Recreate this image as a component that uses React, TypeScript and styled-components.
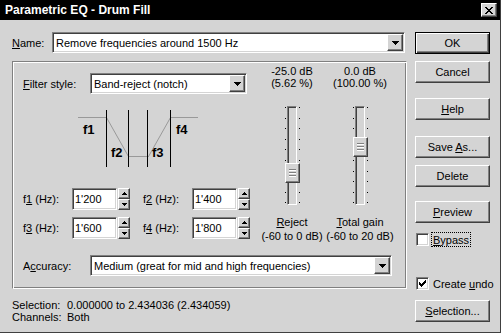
import React from 'react'
import styled, { createGlobalStyle, css } from 'styled-components'

const GlobalStyle = createGlobalStyle`
  html, body {
    margin: 0;
    padding: 0;
    background: #d4d4d4;
  }
  body {
    font-family: "Liberation Sans", Arial, sans-serif;
    font-size: 11px;
    color: #000;
  }
`

const raised = css`
  box-sizing: border-box;
  background: #d4d4d4;
  border: 1px solid;
  border-color: #fff #404040 #404040 #fff;
  box-shadow: inset -1px -1px #808080;
`

const sunken = css`
  box-sizing: border-box;
  border: 1px solid;
  border-color: #808080 #fff #fff #808080;
  box-shadow: inset 1px 1px #404040, inset -1px -1px #d4d4d4;
`

const Window = styled.div`
  box-sizing: border-box;
  width: 501px;
  height: 333px;
  background: #d4d4d4;
  border-right: 1px solid #404040;
  border-bottom: 1px solid #404040;
  display: flex;
  flex-direction: column;
  overflow: hidden;
`

const TitleBar = styled.div`
  height: 20px;
  flex: none;
  background: #000;
  color: #fff;
  display: flex;
  align-items: center;
  justify-content: space-between;
  padding: 0 3px 0 5px;
  font-size: 12px;
  font-weight: bold;
`

const CloseButton = styled.span`
  ${raised}
  width: 16px;
  height: 14px;
  display: flex;
  align-items: center;
  justify-content: center;
`

const Body = styled.div`
  display: flex;
  padding: 12px 0 0 12px;
`

const MainColumn = styled.div`
  width: 395px;
  display: flex;
  flex-direction: column;
`

const SideColumn = styled.div`
  width: 75px;
  margin-left: 8px;
  display: flex;
  flex-direction: column;
`

const Row = styled.div<{ $top?: number }>`
  display: flex;
  align-items: center;
  margin-top: ${(p) => p.$top ?? 0}px;
`

const Label = styled.span<{ $width: number }>`
  width: ${(p) => p.$width}px;
  flex: none;
  white-space: nowrap;
`

const Combo = styled.div<{ $width: number }>`
  ${sunken}
  width: ${(p) => p.$width}px;
  height: 21px;
  padding: 1px;
  display: flex;
  align-items: center;
  background: #fff;
`

const ComboText = styled.span`
  flex: 1;
  padding-left: 2px;
  white-space: nowrap;
  overflow: hidden;
`

const DropButton = styled.span`
  ${raised}
  width: 16px;
  height: 17px;
  flex: none;
  display: flex;
  align-items: center;
  justify-content: center;
`

const GroupBox = styled.div`
  box-sizing: border-box;
  height: 228px;
  margin-top: 8px;
  border: 1px solid;
  border-color: #808080 #fff #fff #808080;
  box-shadow: inset 1px 1px #fff, inset -1px -1px #808080;
  padding: 11px 0 0 10px;
`

const Upper = styled.div`
  display: flex;
  align-items: flex-start;
`

const FilterPane = styled.div`
  width: 228px;
  display: flex;
  flex-direction: column;
`

const Diagram = styled.svg`
  display: block;
  margin: 16px 0 0 55px;
`

const FreqRow = styled.div<{ $top: number }>`
  display: flex;
  align-items: center;
  margin-top: ${(p) => p.$top}px;
`

const FreqField = styled.div<{ $left: number }>`
  display: flex;
  align-items: center;
  margin-left: ${(p) => p.$left}px;
`

const NumInput = styled.div`
  ${sunken}
  width: 45px;
  height: 22px;
  padding: 1px 2px;
  display: flex;
  align-items: center;
  background: #fff;
`

const Spinner = styled.div`
  width: 12px;
  height: 22px;
  margin-left: 1px;
  display: flex;
  flex-direction: column;
`

const SpinButton = styled.span`
  ${raised}
  height: 11px;
  display: flex;
  align-items: center;
  justify-content: center;
`

const SliderPane = styled.div`
  display: flex;
  gap: 3px;
  margin: -8px 0 0 10px;
`

const SliderCol = styled.div<{ $width: number }>`
  width: ${(p) => p.$width}px;
  display: flex;
  flex-direction: column;
  align-items: center;
  text-align: center;
  white-space: nowrap;
`

const ValueText = styled.div`
  line-height: 12px;
`

const Caption = styled.div`
  line-height: 14px;
`

const SliderBox = styled.div`
  position: relative;
  width: 15px;
  height: 99px;
  margin: 17px 0 10px;
  background:
    repeating-linear-gradient(to bottom, #000 0 1px, transparent 1px 10.6px) left 1px / 1px 97px no-repeat,
    repeating-linear-gradient(to bottom, #000 0 1px, transparent 1px 10.6px) right 1px / 1px 97px no-repeat;
`

const Track = styled.div`
  ${sunken}
  width: 10px;
  height: 99px;
  margin-left: 2px;
  background: #d4d4d4;
`

const Thumb = styled.div<{ $top: number }>`
  ${raised}
  position: absolute;
  left: 0;
  top: ${(p) => p.$top}px;
  width: 15px;
  height: 20px;
  display: flex;
  align-items: center;
  justify-content: center;
`

const Grip = styled.span`
  width: 7px;
  height: 8px;
  background: repeating-linear-gradient(to bottom, #808080 0 1px, #fff 1px 2px, transparent 2px 3px);
`

const AccuracyRow = styled(Row)`
  margin-top: 12px;
`

const Status = styled.div`
  display: grid;
  grid-template-columns: 55px auto;
  line-height: 12px;
  margin-top: 10px;
`

const Button = styled.div<{ $top: number; $default?: boolean }>`
  ${raised}
  width: 75px;
  height: 22px;
  flex: none;
  margin-top: ${(p) => p.$top}px;
  display: flex;
  align-items: center;
  justify-content: center;
  white-space: nowrap;
  ${(p) =>
    p.$default &&
    css`
      border-color: #000;
      box-shadow: inset 1px 1px #fff, inset -1px -1px #404040, inset -2px -2px #808080;
    `}
`

const CheckRow = styled.div<{ $top: number }>`
  display: flex;
  align-items: center;
  height: 15px;
  margin: ${(p) => p.$top}px 0 0 1px;
  white-space: nowrap;
`

const CheckBox = styled.span`
  ${sunken}
  width: 13px;
  height: 13px;
  flex: none;
  background: #fff;
  display: flex;
  align-items: center;
  justify-content: center;
`

const CheckText = styled.span<{ $focused?: boolean }>`
  margin-left: 3px;
  padding: 1px 1px 0;
  line-height: 12px;
  outline: ${(p) => (p.$focused ? '1px dotted #000' : 'none')};
`

const ArrowDown = () => (
  <svg width='7' height='4' viewBox='0 0 7 4' shapeRendering='crispEdges'>
    <path d='M0 0h7v1h-1v1h-1v1h-1v1h-1v-1h-1v-1h-1v-1h-1z' fill='#000' />
  </svg>
)

const SpinArrow = ({ up }: { up?: boolean }) => (
  <svg width='5' height='3' viewBox='0 0 5 3' shapeRendering='crispEdges'>
    <path
      d={up ? 'M2 0h1v1h1v1h1v1h-5v-1h1v-1h1z' : 'M0 0h5v1h-1v1h-1v1h-1v-1h-1v-1h-1z'}
      fill='#000'
    />
  </svg>
)

const CloseGlyph = () => (
  <svg width='8' height='7' viewBox='0 0 8 7' shapeRendering='crispEdges'>
    <path
      d='M0 0h2v1h1v1h2v-1h1v-1h2v1h-1v1h-1v1h-1v1h1v1h1v1h1v1h-2v-1h-1v-1h-2v1h-1v1h-2v-1h1v-1h1v-1h1v-1h-1v-1h-1v-1h-1z'
      fill='#000'
    />
  </svg>
)

const Check = () => (
  <svg width='7' height='7' viewBox='0 0 7 7' shapeRendering='crispEdges'>
    <path d='M6 0h1v3h-1v1h-1v1h-1v1h-1v1h-1v-1h-1v-1h-1v-3h1v1h1v1h1v-1h1v-1h1v-1h1z' fill='#000' />
  </svg>
)

const ComboBox = ({ width, value }: { width: number; value: string }) => (
  <Combo $width={width}>
    <ComboText>{value}</ComboText>
    <DropButton>
      <ArrowDown />
    </DropButton>
  </Combo>
)

const Freq = ({ n, value, left }: { n: string; value: string; left: number }) => (
  <FreqField $left={left}>
    <Label $width={49}>
      f<u>{n}</u> (Hz):
    </Label>
    <NumInput>{value}</NumInput>
    <Spinner>
      <SpinButton>
        <SpinArrow up />
      </SpinButton>
      <SpinButton>
        <SpinArrow />
      </SpinButton>
    </Spinner>
  </FreqField>
)

const FilterDiagram = () => (
  <Diagram width='121' height='57' viewBox='0 0 121 57' shapeRendering='crispEdges'>
    <g stroke='#999' fill='none'>
      <path d='M0 7.5H28.5' />
      <path d='M92.5 7.5H120' />
      <path d='M50.5 46.5H70.5' />
      <path d='M28.5 7.5L50.5 46.5M70.5 46.5L92.5 7.5' shapeRendering='auto' />
    </g>
    <g stroke='#000'>
      <path d='M28.5 0V57M50.5 0V57M69.5 0V57M92.5 0V57' />
    </g>
    <g fontFamily='"Liberation Sans", Arial, sans-serif' fontWeight='bold' fontSize='13'>
      <text x='5' y='24'>f1</text>
      <text x='33' y='47'>f2</text>
      <text x='74' y='47'>f3</text>
      <text x='98' y='24'>f4</text>
    </g>
  </Diagram>
)

const Slider = ({ thumb }: { thumb: number }) => (
  <SliderBox>
    <Track />
    <Thumb $top={thumb}>
      <Grip />
    </Thumb>
  </SliderBox>
)

export default function App() {
  return (
    <>
      <GlobalStyle />
      <Window>
        <TitleBar>
          <span>Parametric EQ - Drum Fill</span>
          <CloseButton>
            <CloseGlyph />
          </CloseButton>
        </TitleBar>
        <Body>
          <MainColumn>
            <Row>
              <Label $width={40}>
                <u>N</u>ame:
              </Label>
              <ComboBox width={353} value='Remove frequencies around 1500 Hz' />
            </Row>
            <GroupBox>
              <Upper>
                <FilterPane>
                  <Row>
                    <Label $width={67}>
                      <u>F</u>ilter style:
                    </Label>
                    <ComboBox width={157} value='Band-reject (notch)' />
                  </Row>
                  <FilterDiagram />
                  <FreqRow $top={21}>
                    <Freq n='1' value="1'200" left={0} />
                    <Freq n='2' value="1'400" left={13} />
                  </FreqRow>
                  <FreqRow $top={7}>
                    <Freq n='3' value="1'600" left={0} />
                    <Freq n='4' value="1'800" left={13} />
                  </FreqRow>
                </FilterPane>
                <SliderPane>
                  <SliderCol $width={62}>
                    <ValueText>-25.0 dB</ValueText>
                    <ValueText>(5.62 %)</ValueText>
                    <Slider thumb={57} />
                    <Caption>
                      <u>R</u>eject
                    </Caption>
                    <Caption>(-60 to 0 dB)</Caption>
                  </SliderCol>
                  <SliderCol $width={68}>
                    <ValueText>0.0 dB</ValueText>
                    <ValueText>(100.00 %)</ValueText>
                    <Slider thumb={31} />
                    <Caption>
                      <u>T</u>otal gain
                    </Caption>
                    <Caption>(-60 to 20 dB)</Caption>
                  </SliderCol>
                </SliderPane>
              </Upper>
              <AccuracyRow>
                <Label $width={67}>
                  A<u>c</u>curacy:
                </Label>
                <ComboBox width={302} value='Medium (great for mid and high frequencies)' />
              </AccuracyRow>
            </GroupBox>
            <Status>
              <span>Selection:</span>
              <span>0.000000 to 2.434036 (2.434059)</span>
              <span>Channels:</span>
              <span>Both</span>
            </Status>
          </MainColumn>
          <SideColumn>
            <Button $top={0} $default>
              <span>OK</span>
            </Button>
            <Button $top={7}>
              <span>Cancel</span>
            </Button>
            <Button $top={15}>
              <span>
                <u>H</u>elp
              </span>
            </Button>
            <Button $top={16}>
              <span>
                Save <u>A</u>s...
              </span>
            </Button>
            <Button $top={7}>
              <span>Delete</span>
            </Button>
            <Button $top={14}>
              <span>
                <u>P</u>review
              </span>
            </Button>
            <CheckRow $top={9}>
              <CheckBox />
              <CheckText $focused>
                <u>B</u>ypass
              </CheckText>
            </CheckRow>
            <CheckRow $top={29}>
              <CheckBox>
                <Check />
              </CheckBox>
              <CheckText>
                Create <u>u</u>ndo
              </CheckText>
            </CheckRow>
            <Button $top={9}>
              <span>
                <u>S</u>election...
              </span>
            </Button>
          </SideColumn>
        </Body>
      </Window>
    </>
  )
}
